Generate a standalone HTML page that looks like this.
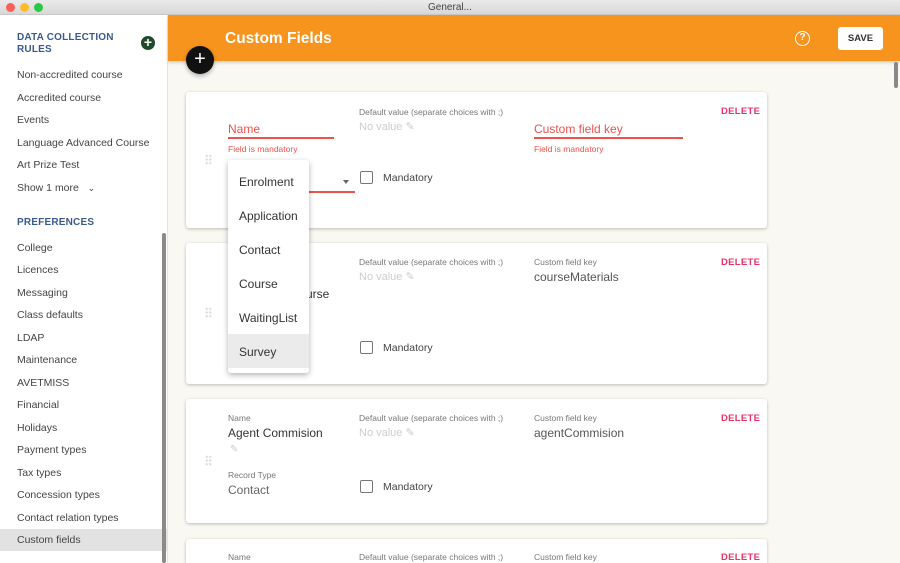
<!DOCTYPE html>
<html style="width:900px;height:563px;overflow:hidden"><head><style>
*{margin:0;padding:0;box-sizing:border-box}
body{width:900px;height:563px;overflow:hidden;font-family:"Liberation Sans",sans-serif;background:#faf8f2;position:relative;color:#444}
.a{position:absolute}
.tb{left:0;top:0;width:900px;height:15px;background:linear-gradient(#eaeaea,#d8d8d8);border-bottom:1px solid #c8c8c8;font-size:10px;color:#444;text-align:center;line-height:15px}
.dot{top:3px;width:9px;height:9px;border-radius:50%}
.side{left:0;top:15px;width:168px;height:548px;background:#fff;border-right:1px solid #e4e4e4}
.si{left:17px;font-size:10.5px;color:#444}
.sh{left:17px;font-size:10px;font-weight:bold;color:#3a5a8c;letter-spacing:.2px}
.hdr{left:168px;top:15px;width:732px;height:46px;background:#f7941d;box-shadow:0 2px 3px rgba(0,0,0,.15)}
.card{left:186px;width:581px;background:#fff;border-radius:3px;box-shadow:0 1px 3px rgba(0,0,0,.25)}
.lbl{font-size:8.5px;color:#777}
.ph{font-size:11px;color:#ccc}
.val{font-size:12px;color:#333}
.del{font-size:9.5px;font-weight:bold;color:#e8336a;letter-spacing:.3px}
.err{font-size:8.5px;color:#f0504a}
.cb{width:13px;height:13px;border:1.5px solid #777;border-radius:2px}
.mand{font-size:10.5px;color:#444}
.grip{width:7px;height:11px;background-image:radial-gradient(circle,#ddd 1.1px,transparent 1.3px);background-size:3.5px 3.7px}
.menu{left:228px;top:160px;width:81px;height:213px;background:#fff;border-radius:3px;box-shadow:0 2px 6px rgba(0,0,0,.3)}
.mi{position:absolute;left:11px;font-size:12px;color:#333}
</style></head><body>
<div class="a tb">General...</div>
<div class="a dot" style="left:6px;background:#fc5f57"></div>
<div class="a dot" style="left:20px;background:#fdbc2e"></div>
<div class="a dot" style="left:34px;background:#2ac840"></div>

<div class="a side"></div>
<div class="a sh" style="top:32px;line-height:12px">DATA COLLECTION<br>RULES</div>
<div class="a" style="left:141px;top:36px;width:14px;height:14px;border-radius:50%;background:#1f4a2c;color:#fff;font-size:14px;line-height:13px;text-align:center;font-weight:bold">+</div>
<div class="a si" style="top:69px">Non-accredited course</div>
<div class="a si" style="top:92px">Accredited course</div>
<div class="a si" style="top:114px">Events</div>
<div class="a si" style="top:137px">Language Advanced Course</div>
<div class="a si" style="top:159px">Art Prize Test</div>
<div class="a si" style="top:182px">Show 1 more &nbsp;&nbsp;<span style="font-size:9px">&#8964;</span></div>
<div class="a sh" style="top:217px">PREFERENCES</div>
<div class="a si" style="top:242px">College</div>
<div class="a si" style="top:264px">Licences</div>
<div class="a si" style="top:287px">Messaging</div>
<div class="a si" style="top:309px">Class defaults</div>
<div class="a si" style="top:332px">LDAP</div>
<div class="a si" style="top:354px">Maintenance</div>
<div class="a si" style="top:377px">AVETMISS</div>
<div class="a si" style="top:399px">Financial</div>
<div class="a si" style="top:422px">Holidays</div>
<div class="a si" style="top:444px">Payment types</div>
<div class="a si" style="top:467px">Tax types</div>
<div class="a si" style="top:489px">Concession types</div>
<div class="a si" style="top:512px">Contact relation types</div>
<div class="a" style="left:0;top:529px;width:168px;height:22px;background:#e2e2e2"></div>
<div class="a si" style="top:534px">Custom fields</div>
<div class="a" style="left:162px;top:233px;width:4px;height:330px;background:#8a8a8a;border-radius:2px"></div>

<div class="a hdr"></div>
<div class="a" style="left:225px;top:30px;font-size:15.5px;color:#fff;font-weight:bold">Custom Fields</div>
<div class="a" style="left:795px;top:31px;width:15px;height:15px;border:1.5px solid #fff;border-radius:50%;color:#fff;font-size:10px;line-height:12px;text-align:center;font-weight:bold">?</div>
<div class="a" style="left:838px;top:27px;width:45px;height:23px;background:#fff;border-radius:3px;font-size:9.5px;font-weight:bold;color:#333;text-align:center;line-height:23px">SAVE</div>
<div class="a" style="left:186px;top:46px;width:28px;height:28px;border-radius:50%;background:#111;color:#fff;font-size:20px;line-height:27px;text-align:center;box-shadow:0 2px 4px rgba(0,0,0,.3)">+</div>
<div class="a" style="left:894px;top:62px;width:4px;height:26px;background:#888;border-radius:2px"></div>

<!-- card1 -->
<div class="a card" style="top:92px;height:136px"></div>
<div class="a" style="left:228px;top:122px;font-size:12px;color:#f0504a">Name</div>
<div class="a" style="left:228px;top:137px;width:106px;height:1.5px;background:#f0504a"></div>
<div class="a err" style="left:228px;top:144px">Field is mandatory</div>
<div class="a lbl" style="left:359px;top:107px">Default value (separate choices with ;)</div>
<div class="a ph" style="left:359px;top:120px">No value ✎</div>
<div class="a" style="left:534px;top:122px;font-size:12px;color:#f0504a">Custom field key</div>
<div class="a" style="left:534px;top:137px;width:149px;height:1.5px;background:#f0504a"></div>
<div class="a err" style="left:534px;top:144px">Field is mandatory</div>
<div class="a del" style="left:721px;top:106px">DELETE</div>
<div class="a grip" style="left:205px;top:154px"></div>
<div class="a" style="left:309px;top:191px;width:46px;height:1.5px;background:#f0504a"></div>
<div class="a" style="left:343px;top:180px;border:3.5px solid transparent;border-top:4px solid #666"></div>
<div class="a cb" style="left:360px;top:171px"></div>
<div class="a mand" style="left:383px;top:172px">Mandatory</div>

<!-- card2 -->
<div class="a card" style="top:243px;height:141px"></div>
<div class="a val" style="left:296px;top:269px">re</div>
<div class="a val" style="left:306px;top:287px">urse</div>
<div class="a lbl" style="left:359px;top:257px">Default value (separate choices with ;)</div>
<div class="a ph" style="left:359px;top:270px">No value ✎</div>
<div class="a lbl" style="left:534px;top:257px">Custom field key</div>
<div class="a val" style="left:534px;top:270px;color:#555">courseMaterials</div>
<div class="a del" style="left:721px;top:257px">DELETE</div>
<div class="a grip" style="left:205px;top:307px"></div>
<div class="a cb" style="left:360px;top:341px"></div>
<div class="a mand" style="left:383px;top:342px">Mandatory</div>

<!-- card3 -->
<div class="a card" style="top:399px;height:124px"></div>
<div class="a lbl" style="left:228px;top:413px">Name</div>
<div class="a val" style="left:228px;top:426px">Agent Commision</div>
<div class="a ph" style="left:230px;top:444px;font-size:10px">✎</div>
<div class="a lbl" style="left:228px;top:470px">Record Type</div>
<div class="a val" style="left:228px;top:483px;color:#666">Contact</div>
<div class="a lbl" style="left:359px;top:413px">Default value (separate choices with ;)</div>
<div class="a ph" style="left:359px;top:426px">No value ✎</div>
<div class="a lbl" style="left:534px;top:413px">Custom field key</div>
<div class="a val" style="left:534px;top:426px;color:#555">agentCommision</div>
<div class="a del" style="left:721px;top:413px">DELETE</div>
<div class="a grip" style="left:205px;top:455px"></div>
<div class="a cb" style="left:360px;top:480px"></div>
<div class="a mand" style="left:383px;top:481px">Mandatory</div>

<!-- card4 -->
<div class="a card" style="top:539px;height:24px;border-radius:3px 3px 0 0"></div>
<div class="a lbl" style="left:228px;top:552px">Name</div>
<div class="a lbl" style="left:359px;top:552px">Default value (separate choices with ;)</div>
<div class="a lbl" style="left:534px;top:552px">Custom field key</div>
<div class="a del" style="left:721px;top:552px">DELETE</div>

<!-- menu -->
<div class="a menu">
<div class="mi" style="top:15px">Enrolment</div>
<div class="mi" style="top:49px">Application</div>
<div class="mi" style="top:83px">Contact</div>
<div class="mi" style="top:117px">Course</div>
<div class="mi" style="top:151px">WaitingList</div>
<div style="position:absolute;left:0;top:174px;width:81px;height:34px;background:#ebebeb"></div>
<div class="mi" style="top:185px">Survey</div>
</div>
</body></html>
